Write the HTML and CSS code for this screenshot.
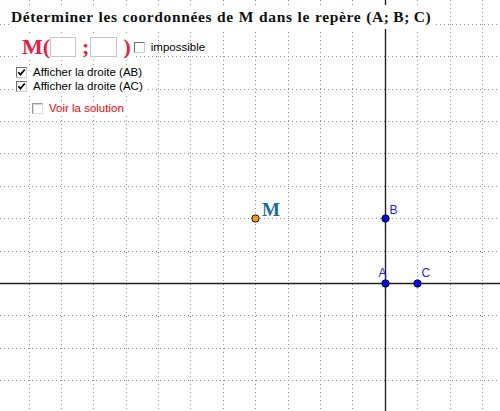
FILE: index.html
```html
<!DOCTYPE html>
<html lang="fr">
<head>
    <meta charset="UTF-8">
    <meta name="viewport" content="width=device-width, initial-scale=1.0">
    <link rel="stylesheet" href="styles.css">
    <title>Coordonnées dans un repère</title>
</head>
<body>
    <div class="stage">
        <svg class="graph" width="500" height="411" viewBox="0 0 500 411">
            <g class="grid">
                <line x1="29.5" y1="0" x2="29.5" y2="411"/>
                <line x1="61.5" y1="0" x2="61.5" y2="411"/>
                <line x1="93.5" y1="0" x2="93.5" y2="411"/>
                <line x1="126.5" y1="0" x2="126.5" y2="411"/>
                <line x1="158.5" y1="0" x2="158.5" y2="411"/>
                <line x1="190.5" y1="0" x2="190.5" y2="411"/>
                <line x1="223.5" y1="0" x2="223.5" y2="411"/>
                <line x1="255.5" y1="0" x2="255.5" y2="411"/>
                <line x1="288.5" y1="0" x2="288.5" y2="411"/>
                <line x1="320.5" y1="0" x2="320.5" y2="411"/>
                <line x1="352.5" y1="0" x2="352.5" y2="411"/>
                <line x1="417.5" y1="0" x2="417.5" y2="411"/>
                <line x1="450.5" y1="0" x2="450.5" y2="411"/>
                <line x1="482.5" y1="0" x2="482.5" y2="411"/>
                <line x1="0" y1="24.5" x2="500" y2="24.5"/>
                <line x1="0" y1="56.5" x2="500" y2="56.5"/>
                <line x1="0" y1="89.5" x2="500" y2="89.5"/>
                <line x1="0" y1="121.5" x2="500" y2="121.5"/>
                <line x1="0" y1="153.5" x2="500" y2="153.5"/>
                <line x1="0" y1="186.5" x2="500" y2="186.5"/>
                <line x1="0" y1="218.5" x2="500" y2="218.5"/>
                <line x1="0" y1="251.5" x2="500" y2="251.5"/>
                <line x1="0" y1="315.5" x2="500" y2="315.5"/>
                <line x1="0" y1="348.5" x2="500" y2="348.5"/>
                <line x1="0" y1="380.5" x2="500" y2="380.5"/>
            </g>
            <g class="axes">
                <line x1="385.5" y1="0" x2="385.5" y2="411"/>
                <line x1="0" y1="283.5" x2="500" y2="283.5"/>
            </g>
            <circle class="pt pt-blue" cx="385.5" cy="283.5" r="3.7"/>
            <circle class="pt pt-blue" cx="385.5" cy="218.5" r="3.7"/>
            <circle class="pt pt-blue" cx="417.5" cy="283.5" r="3.7"/>
            <circle class="pt pt-orange" cx="255.5" cy="218.5" r="3.7"/>
            <text class="lbl" x="378.5" y="276.5">A</text>
            <text class="lbl" x="389.5" y="213.5">B</text>
            <text class="lbl" x="421.5" y="277">C</text>
            <text class="lbl-m" x="262" y="216">M</text>
        </svg>

        <div class="overlay">
            <div class="title">Déterminer les coordonnées de M dans le repère (A;&thinsp;B;&thinsp;C)</div>

            <div class="coords">
                <div class="answer">
                    <span class="sym sym-m">M(</span>
                    <span class="field"></span>
                    <span class="sym sym-semi">;</span>
                    <span class="field field-2"></span>
                    <span class="sym sym-close">)</span>
                </div>
                <label class="check check-free">
                    <span class="box"></span>
                    <span>impossible</span>
                </label>
            </div>

            <div class="options">
                <label class="check">
                    <span class="box">
                        <svg width="9" height="9" viewBox="0 0 9 9"><polyline points="1.3,4.2 3.4,6.6 7.8,1.5"/></svg>
                    </span>
                    <span>Afficher la droite (AB)</span>
                </label>
                <label class="check">
                    <span class="box">
                        <svg width="9" height="9" viewBox="0 0 9 9"><polyline points="1.3,4.2 3.4,6.6 7.8,1.5"/></svg>
                    </span>
                    <span>Afficher la droite (AC)</span>
                </label>
                <label class="check check-solution">
                    <span class="box box-soft"></span>
                    <span>Voir la solution</span>
                </label>
            </div>
        </div>
    </div>
</body>
</html>
```

FILE: styles.css
```css
* {
    margin: 0;
    padding: 0;
    box-sizing: border-box;
}
body {
    background: #ffffff;
    font-family: "Liberation Sans", Arial, sans-serif;
    overflow: hidden;
}
.stage {
    position: relative;
    width: 500px;
    height: 411px;
    background: #ffffff;
}
.graph {
    position: absolute;
    top: 0;
    left: 0;
}
.grid line {
    stroke: #8e8e8e;
    stroke-width: 1;
    stroke-dasharray: 1 3;
}
.axes line {
    stroke: #222222;
    stroke-width: 1.4;
}
.pt {
    stroke: #111111;
    stroke-width: 1;
}
.pt-blue {
    fill: #0000ff;
}
.pt-orange {
    fill: #f59a10;
}
.lbl {
    font-family: "Liberation Sans", Arial, sans-serif;
    font-size: 12px;
    fill: #2020ff;
}
.lbl-m {
    font-family: "Liberation Serif", "Times New Roman", serif;
    font-weight: bold;
    font-size: 19px;
    fill: #1a6c9e;
}

/* widgets over the canvas */
.overlay {
    position: absolute;
    top: 0;
    left: 0;
    padding-top: 5px;
}
.title {
    display: inline-block;
    margin-left: 10px;
    padding: 0 3px 0 1px;
    background: #ffffff;
    font-family: "Liberation Serif", "Times New Roman", serif;
    font-weight: bold;
    font-size: 15.5px;
    letter-spacing: 0.62px;
    word-spacing: 0.5px;
    line-height: 24px;
    color: #111111;
    white-space: nowrap;
}
.coords {
    display: flex;
    align-items: center;
    margin-top: 6px;
    height: 24px;
}
.answer {
    display: flex;
    align-items: center;
    height: 24px;
    margin-left: 19px;
    padding-left: 3px;
    padding-right: 2px;
    background: #ffffff;
}
.sym {
    font-family: "Liberation Serif", "Times New Roman", serif;
    font-weight: bold;
    font-size: 22px;
    line-height: 24px;
    color: #ee1a44;
}
.sym-semi {
    margin-left: 6px;
}
.sym-close {
    margin-left: 6px;
}
.field {
    width: 26px;
    height: 20px;
    border: 1px solid #c4c4c4;
    background: #ffffff;
}
.field-2 {
    width: 27px;
    margin-left: 1px;
}
.check {
    display: flex;
    align-items: center;
    height: 14px;
    font-size: 11.5px;
    color: #000000;
    white-space: nowrap;
}
.check-free {
    margin-left: 1px;
}
.box {
    display: flex;
    align-items: center;
    justify-content: center;
    width: 11px;
    height: 11px;
    margin-right: 6px;
    border: 1px solid;
    border-color: #6f6f6f #cfcfcf #cfcfcf #6f6f6f;
    background: #ffffff;
}
.box svg polyline {
    fill: none;
    stroke: #000000;
    stroke-width: 1.7;
}
.box-soft {
    border-color: #9a9a9a #dedede #dedede #9a9a9a;
    box-shadow: inset 1px 1px 0 #d8d8d8;
}
.options {
    display: flex;
    flex-direction: column;
    align-items: flex-start;
    margin-top: 6px;
    margin-left: 16px;
}
.options .check {
    padding-right: 3px;
    background: #ffffff;
}
.check-solution {
    margin-top: 8px;
    margin-left: 16px;
    color: #ff0000;
}
```
